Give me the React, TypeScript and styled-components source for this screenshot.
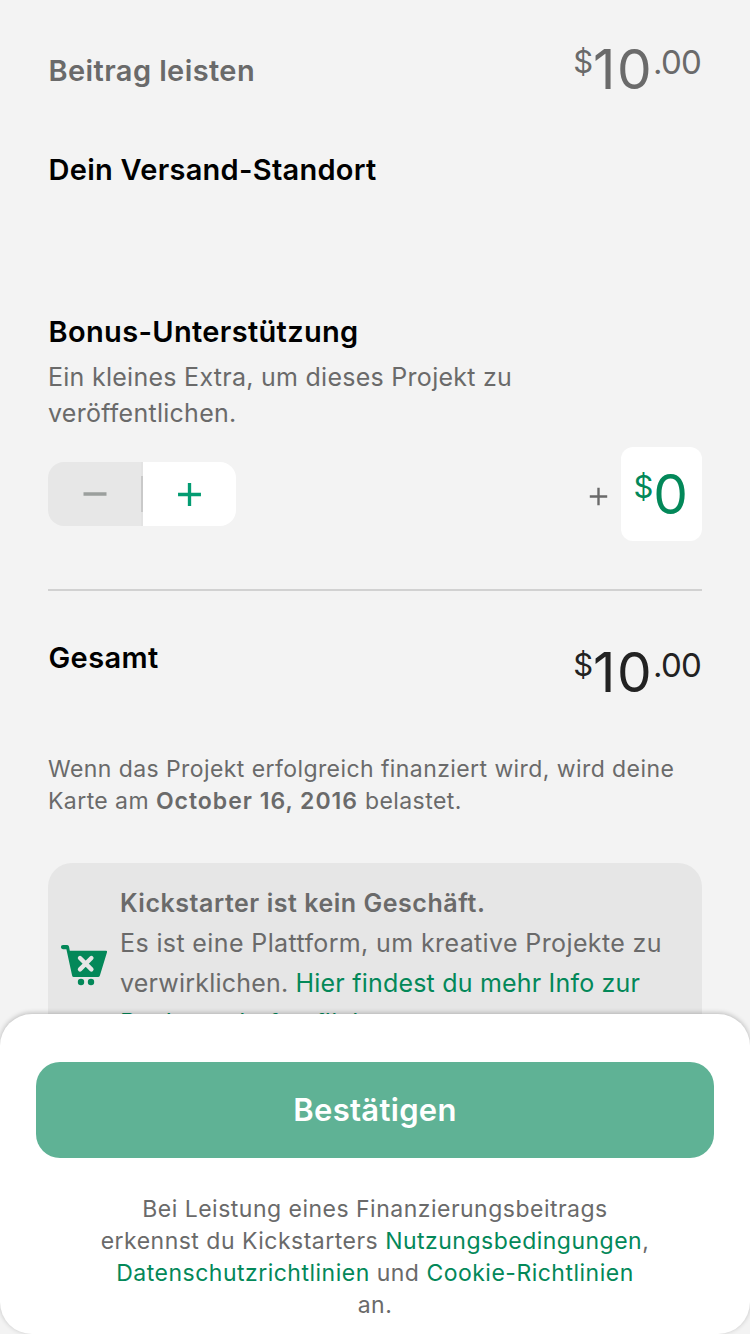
import React from "react";
import styled, { createGlobalStyle } from "styled-components";

const GlobalStyle = createGlobalStyle`
  * { box-sizing: border-box; }
  body {
    margin: 0;
    background: #f3f3f3;
    font-family: Inter, "Liberation Sans", sans-serif;
  }
`;

const GREY = "#6a6a6a";
const GREEN = "#038859";

const Screen = styled.div`
  position: relative;
  width: 750px;
  height: 1334px;
  overflow: hidden;
  background: #f3f3f3;
`;

const Content = styled.main`
  display: flex;
  flex-direction: column;
  padding: 40px 48px 0;
`;

const Row = styled.div<{ $height: number }>`
  display: flex;
  justify-content: space-between;
  align-items: flex-start;
  height: ${(p) => p.$height}px;
`;

const Heading = styled.h2<{ $color?: string; $spacing?: number }>`
  margin: 0;
  padding-left: 0.5px;
  font-size: 29px;
  font-weight: 600;
  line-height: 36px;
  letter-spacing: ${(p) => p.$spacing ?? 0.3}px;
  color: ${(p) => p.$color ?? "#000"};
  white-space: nowrap;
`;

const PledgeHeading = styled(Heading)`
  padding-top: 13px;
`;

const Section = styled.section<{ $height: number }>`
  height: ${(p) => p.$height}px;
`;

const Description = styled.p`
  margin: 9px 0 0;
  font-size: 25px;
  line-height: 36px;
  letter-spacing: 0.27px;
  color: ${GREY};
  white-space: nowrap;
`;

const Amount = styled.div<{ $color: string }>`
  display: flex;
  align-items: flex-start;
  color: ${(p) => p.$color};
`;

const Currency = styled.span`
  font-size: 31px;
  line-height: 43px;
`;

const Whole = styled.span`
  font-size: 55px;
  line-height: 58px;
  letter-spacing: 1.5px;
`;

const Cents = styled.span`
  padding-right: 1px;
  font-size: 33px;
  line-height: 44px;
  letter-spacing: -0.8px;
`;

const BonusRow = styled.div`
  display: flex;
  justify-content: space-between;
  align-items: center;
  height: 94px;
`;

const Stepper = styled.div`
  display: flex;
  width: 188px;
  height: 64px;
  border-radius: 16px;
  overflow: hidden;
`;

const StepButton = styled.button<{ $disabled?: boolean }>`
  display: flex;
  align-items: center;
  justify-content: center;
  width: 93px;
  padding: 0;
  border: 0;
  background: ${(p) => (p.$disabled ? "#e7e7e7" : "#fff")};
`;

const StepDivider = styled.span`
  display: flex;
  align-items: center;
  width: 2px;
  background: #e3e3e3;
  &::before {
    content: "";
    width: 2px;
    height: 36px;
    background: #c9c9c9;
  }
`;

const BonusValue = styled.div`
  display: flex;
  align-items: center;
  gap: 13px;
`;

const PlusSlot = styled.span`
  display: flex;
  padding-top: 4px;
`;

const BonusField = styled.div`
  display: flex;
  justify-content: center;
  width: 81px;
  height: 94px;
  padding-top: 18px;
  border-radius: 12px;
  background: #fff;
`;

const Divider = styled.hr`
  width: 100%;
  height: 2px;
  margin: 48px 0 0;
  border: 0;
  background: #d1d1d1;
`;

const TotalRow = styled(Row)`
  margin-top: 49px;
`;

const TotalPrice = styled.div`
  padding-top: 3px;
`;

const FinePrint = styled.p`
  margin: 0;
  font-size: 23px;
  line-height: 32px;
  letter-spacing: 0.42px;
  color: ${GREY};
  white-space: nowrap;
`;

const Strong = styled.strong<{ $spacing: number }>`
  font-weight: 600;
  letter-spacing: ${(p) => p.$spacing}px;
`;

const Notice = styled.aside`
  display: flex;
  align-items: center;
  height: 200px;
  margin-top: 46px;
  padding: 0 12px;
  border-radius: 24px;
  background: #e6e6e6;
`;

const NoticeText = styled.p`
  margin: 0 0 0 12px;
  font-size: 25px;
  line-height: 40px;
  letter-spacing: 0.38px;
  color: ${GREY};
  white-space: nowrap;
`;

const Tight = styled.span`
  letter-spacing: 0.2px;
`;

const Link = styled.a`
  color: ${GREEN};
`;

const Sheet = styled.footer`
  position: absolute;
  left: 0;
  bottom: 0;
  width: 750px;
  height: 320px;
  padding: 48px 36px 0;
  border-radius: 32px;
  background: #fff;
  box-shadow: 0 -1px 5px rgba(0, 0, 0, 0.24);
`;

const ConfirmButton = styled.button`
  display: block;
  width: 100%;
  height: 96px;
  padding: 0 0 2px;
  border: 0;
  border-radius: 24px;
  background: #5fb295;
  color: #fff;
  font-family: inherit;
  font-size: 31px;
  font-weight: 600;
  letter-spacing: 0.3px;
`;

const Terms = styled(FinePrint)`
  margin-top: 35px;
  letter-spacing: 0.49px;
  text-align: center;
`;

const CartSvg = styled.svg`
  flex: none;
  margin-top: 6px;
`;

const Minus = () => (
  <svg width="24" height="24" viewBox="0 0 24 24">
    <path d="M0.5 12H23.5" stroke="#9b9f9d" strokeWidth="3.4" />
  </svg>
);

const Plus = ({ size, color, width }: { size: number; color: string; width: number }) => (
  <svg width={size} height={size} viewBox="0 0 24 24">
    <path d="M1 12H23M12 1V23" stroke={color} strokeWidth={width} />
  </svg>
);

const CartIcon = () => (
  <CartSvg width="48" height="44" viewBox="0 0 48 44">
    <path
      d="M3 1H7.2Q8.7 1 9 2.6L9.8 6.8H46Q47.4 6.8 47 8.2L39.9 31.5Q39.4 33 38 33H13.7Q12.4 33 12.1 31.5L6.4 5.2H3A2.1 2.1 0 0 1 3 1Z"
      fill={GREEN}
    />
    <path d="M20 14L31.4 25.4M31.4 14L20 25.4" stroke="#e6e6e6" strokeWidth="4.4" strokeLinecap="round" />
    <circle cx="21" cy="38" r="3.2" fill={GREEN} />
    <circle cx="31" cy="38" r="3.2" fill={GREEN} />
  </CartSvg>
);

const Price = ({ color }: { color: string }) => (
  <Amount $color={color}>
    <Currency>$</Currency>
    <Whole>10</Whole>
    <Cents>.00</Cents>
  </Amount>
);

export default function App() {
  return (
    <>
      <GlobalStyle />
      <Screen>
        <Content>
          <Row $height={112}>
            <PledgeHeading $color={GREY} $spacing={0.4}>Beitrag leisten</PledgeHeading>
            <Price color={GREY} />
          </Row>
          <Section $height={162}>
            <Heading $spacing={0.27}>Dein Versand-Standort</Heading>
          </Section>
          <Section $height={133}>
            <Heading $spacing={0.34}>Bonus-Unterstützung</Heading>
            <Description>
              Ein kleines Extra, um dieses Projekt zu
              <br />
              veröffentlichen.
            </Description>
          </Section>
          <BonusRow>
            <Stepper>
              <StepButton $disabled aria-label="Weniger">
                <Minus />
              </StepButton>
              <StepDivider />
              <StepButton aria-label="Mehr">
                <Plus size={25} color="#039c72" width={3.2} />
              </StepButton>
            </Stepper>
            <BonusValue>
              <PlusSlot>
                <Plus size={19} color={GREY} width={3} />
              </PlusSlot>
              <BonusField>
                <Amount $color={GREEN}>
                  <Currency>$</Currency>
                  <Whole>0</Whole>
                </Amount>
              </BonusField>
            </BonusValue>
          </BonusRow>
          <Divider />
          <TotalRow $height={113}>
            <Heading $spacing={0.4}>Gesamt</Heading>
            <TotalPrice>
              <Price color="#222" />
            </TotalPrice>
          </TotalRow>
          <FinePrint>
            Wenn das Projekt erfolgreich finanziert wird, wird deine
            <br />
            Karte am <Strong $spacing={1}>October 16, 2016</Strong> belastet.
          </FinePrint>
          <Notice>
            <CartIcon />
            <NoticeText>
              <Strong $spacing={0.54}>Kickstarter ist kein Geschäft.</Strong>
              <br />
              Es ist eine Plattform, um kreative Projekte zu
              <br />
              <Tight>
                verwirklichen. <Link>Hier findest du mehr Info zur</Link>
              </Tight>
              <br />
              <Link>Rechenschaftspflicht.</Link>
            </NoticeText>
          </Notice>
        </Content>
        <Sheet>
          <ConfirmButton>Bestätigen</ConfirmButton>
          <Terms>
            Bei Leistung eines Finanzierungsbeitrags
            <br />
            erkennst du Kickstarters <Link>Nutzungsbedingungen</Link>,
            <br />
            <Link>Datenschutzrichtlinien</Link> und <Link>Cookie-Richtlinien</Link>
            <br />
            an.
          </Terms>
        </Sheet>
      </Screen>
    </>
  );
}
